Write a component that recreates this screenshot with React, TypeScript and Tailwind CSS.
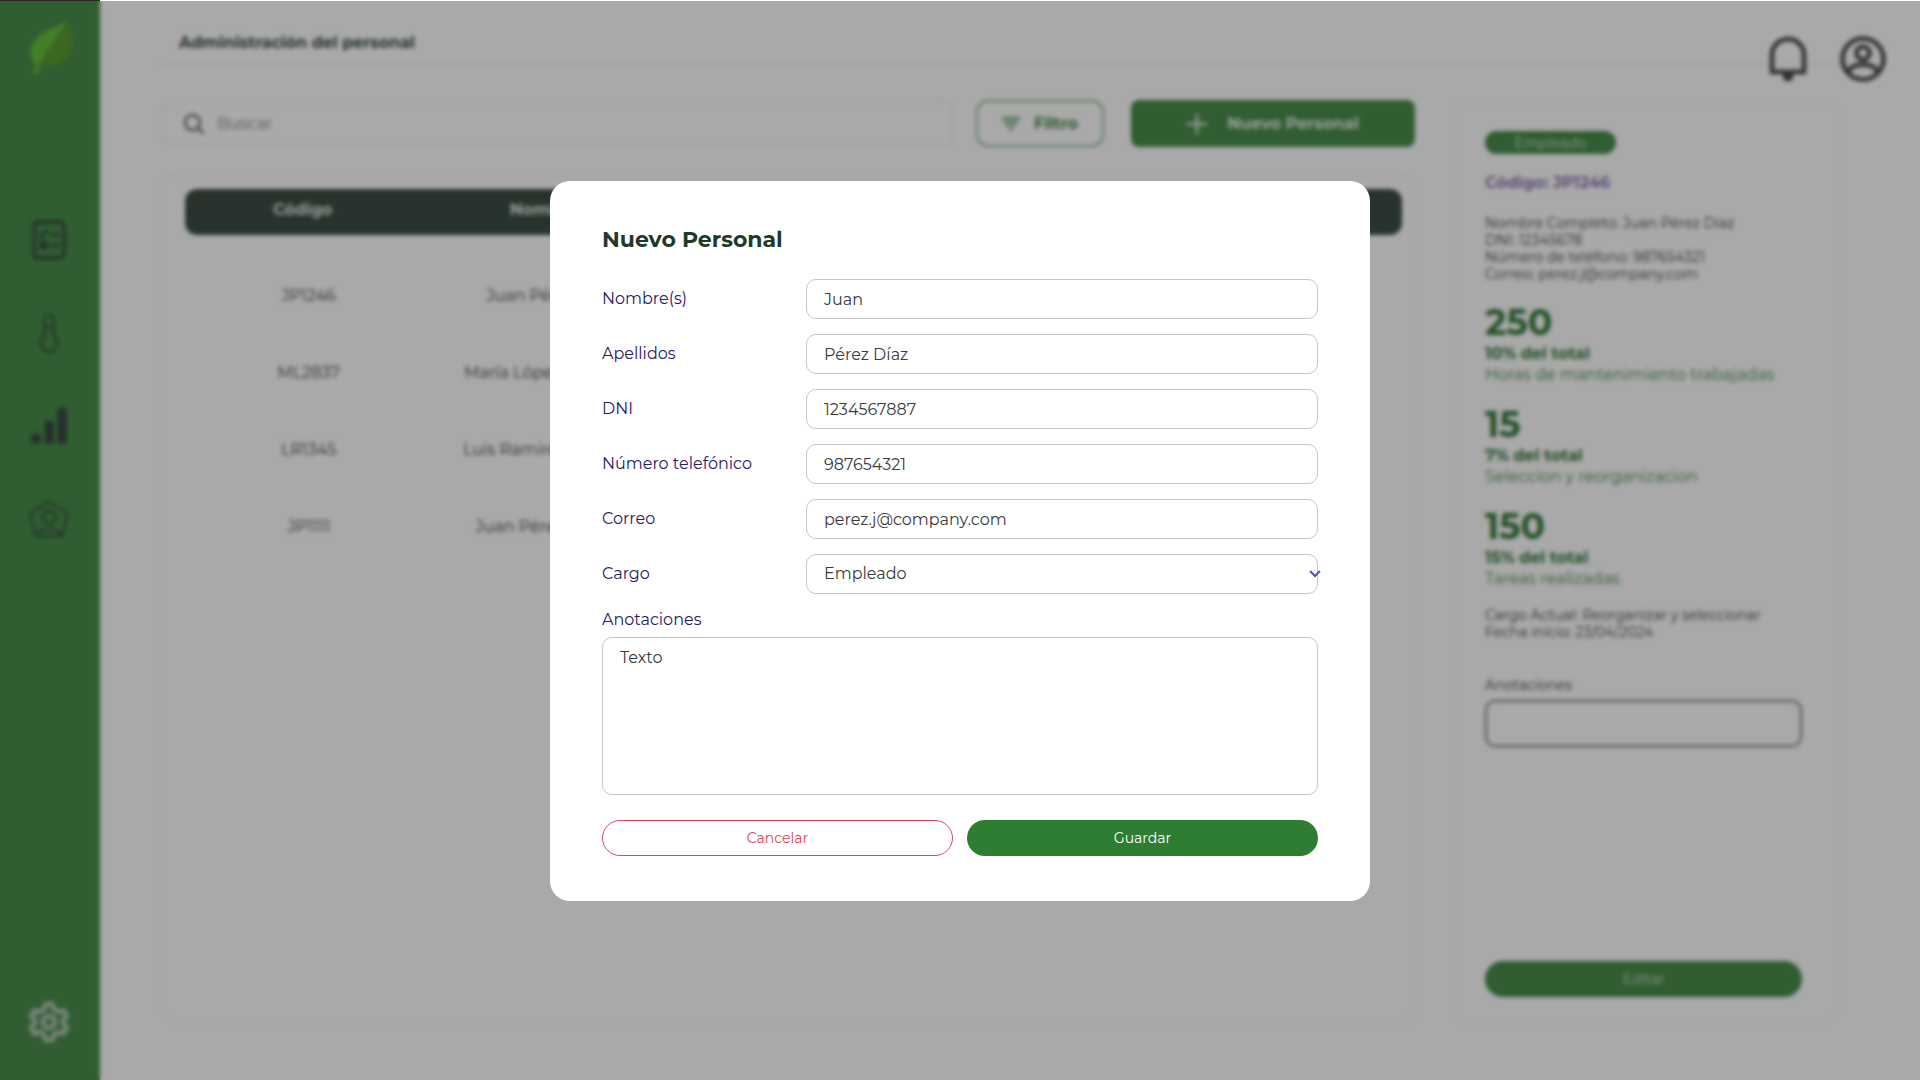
import React from "react";

const people = [
  { code: "JP1246", name: "Juan Pérez Díaz" },
  { code: "ML2837", name: "María López Martínez" },
  { code: "LR1345", name: "Luis Ramirez Vásquez" },
  { code: "JP1111", name: "Juan Pérez Quispe" },
];

const stats = [
  { value: "250", share: "10% del total", label: "Horas de mantenimiento trabajadas" },
  { value: "15", share: "7% del total", label: "Seleccion y reorganizacion" },
  { value: "150", share: "15% del total", label: "Tareas realizadas" },
];

const fields = [
  { id: "nombre", label: "Nombre(s)", value: "Juan", type: "text" },
  { id: "apellidos", label: "Apellidos", value: "Pérez Díaz", type: "text" },
  { id: "dni", label: "DNI", value: "1234567887", type: "text" },
  { id: "telefono", label: "Número telefónico", value: "987654321", type: "tel" },
  { id: "correo", label: "Correo", value: "perez.j@company.com", type: "email" },
];

function LeafLogo() {
  return (
    <svg viewBox="0 0 44 56" className="h-14 w-11" aria-hidden="true">
      <path d="M38 1C30 8 17 10 8 19C-1 28 0 39 7 46L4 54L8 55L11 46Z" fill="#4fb822" />
      <path d="M38 1C46 14 46 29 38 39C31 47 20 49 9 46L38 1Z" fill="#448d14" />
    </svg>
  );
}

function ChecklistIcon() {
  return (
    <svg viewBox="0 0 32 38" className="h-10 w-[34px]" fill="none" stroke="#1f3528" strokeWidth="3.400" aria-hidden="true">
      <rect x="2" y="2" width="28" height="34" rx="3" />
      <path d="M6 13l3 3 6-6M18 14h8M18 24h8" strokeWidth="3" />
      <circle cx="11" cy="24" r="4.500" fill="#1f3528" stroke="none" />
    </svg>
  );
}

function ThermometerIcon() {
  return (
    <svg viewBox="0 0 20 38" className="h-10 w-[22px]" fill="none" stroke="#1f4029" strokeWidth="2.300" aria-hidden="true">
      <path d="M5.500 22V6.500a4.500 4.500 0 0 1 9 0V22a8 8 0 1 1-9 0Z" />
      <path d="M6 13h8" />
    </svg>
  );
}

function BarsIcon() {
  return (
    <svg viewBox="0 0 36 36" className="h-10 w-[38px]" fill="#1f2e28" aria-hidden="true">
      <circle cx="5.500" cy="30" r="5" />
      <rect x="14" y="13" width="8.500" height="22" rx="3.500" />
      <rect x="26" y="1" width="9" height="34" rx="3.500" />
    </svg>
  );
}

function PentagonUserIcon() {
  return (
    <svg viewBox="0 0 42 40" className="h-10 w-[42px]" fill="none" stroke="#1f4029" strokeWidth="2.400" strokeLinejoin="round" aria-hidden="true">
      <path d="M21 2L40 15L34 37H8L2 15Z" />
      <circle cx="21" cy="18" r="6.500" />
      <path d="M9 36c3-8 21-8 24 0" />
    </svg>
  );
}

function GearIcon() {
  return (
    <svg viewBox="0 0 42 42" className="size-[42px]" fill="none" stroke="#b3c3b7" strokeWidth="4.500" strokeLinejoin="round" aria-hidden="true">
      <path d="M17.500 3h7l1.500 5.500 4.500 2.500 5-1.500 3.500 6-4 4v3l4 4-3.500 6-5-1.500-4.500 2.500-1.500 5.500h-7L16 33.500 11.500 31l-5 1.500-3.500-6 4-4v-3l-4-4 3.500-6 5 1.500L16 8.500Z" />
      <circle cx="21" cy="21" r="6" />
    </svg>
  );
}

function BellIcon() {
  return (
    <svg viewBox="0 0 40 47" className="h-[47px] w-10" fill="none" stroke="#2e2e2e" strokeWidth="4.500" aria-hidden="true">
      <path d="M4 37V20a16 16 0 0 1 32 0v17Z" />
      <path d="M15 39h10v3a4 4 0 0 1-4 4h-2a4 4 0 0 1-4-4Z" fill="#2e2e2e" stroke="none" />
    </svg>
  );
}

function UserIcon() {
  return (
    <svg viewBox="0 0 46 46" className="size-[46px]" fill="none" stroke="#2e2e2e" strokeWidth="4.500" aria-hidden="true">
      <circle cx="23" cy="23" r="20.500" />
      <circle cx="23" cy="17" r="6.500" />
      <path d="M8 36c5-10 25-10 30 0" />
    </svg>
  );
}

function Sidebar() {
  return (
    <aside className="flex w-[100px] shrink-0 flex-col items-center bg-[#2f7d32] pt-[19px] pr-0.5 pb-[37px]">
      <a href="#inicio" aria-label="Inicio" className="ml-1"><LeafLogo /></a>
      <nav className="mt-[145px] flex flex-col items-center gap-[53px]">
        <a href="#tareas" aria-label="Tareas"><ChecklistIcon /></a>
        <a href="#temperatura" aria-label="Temperatura"><ThermometerIcon /></a>
        <a href="#reportes" aria-label="Reportes"><BarsIcon /></a>
        <a href="#personal" aria-label="Personal"><PentagonUserIcon /></a>
      </nav>
      <a href="#ajustes" aria-label="Ajustes" className="mt-auto"><GearIcon /></a>
    </aside>
  );
}

function Toolbar() {
  return (
    <div className="flex h-[47px] items-stretch">
      <label className="flex flex-1 items-center gap-3 rounded-xl border-2 border-[#f1f1f1] px-[19px]">
        <svg viewBox="0 0 22 22" className="size-[22px] shrink-0" fill="none" stroke="#555" strokeWidth="2.400" aria-hidden="true">
          <circle cx="9.500" cy="9.500" r="7.500" />
          <path d="M15 15l6 6" />
        </svg>
        <input type="search" aria-label="Buscar" placeholder="Buscar" className="w-full bg-transparent text-base outline-none placeholder:text-[#777]" />
      </label>
      <button type="button" className="ml-[22px] flex w-32 items-center justify-center gap-[14px] rounded-xl border-2 border-[#2f7d32]/60 text-base font-bold text-[#2f7d32]">
        <svg viewBox="0 0 18 14" className="h-[14px] w-[18px]" fill="none" stroke="#5a9a5d" strokeWidth="3" aria-hidden="true">
          <path d="M0 1.500h18M3 6.500h12M6.500 11.500h5" />
        </svg>
        Filtro
      </button>
      <button type="button" className="ml-[27px] flex w-[284px] items-center justify-center gap-5 rounded-lg bg-[#2f7d32] text-base font-bold text-white/85">
        <svg viewBox="0 0 20 20" className="size-5" stroke="currentColor" strokeWidth="2.500" aria-hidden="true">
          <path d="M10 0v20M0 10h20" />
        </svg>
        Nuevo Personal
      </button>
    </div>
  );
}

function PeopleTable() {
  return (
    <div className="mt-[27px] flex-1 rounded-xl border-2 border-[#f3f3f3] pt-[13px] pr-[11px] pl-[21px]">
      <table className="w-full table-fixed text-center text-base text-[#2b2b2b]">
        <thead>
          <tr className="h-[46px] text-white/85">
            <th scope="col" className="w-1/5 rounded-l-xl bg-[#1f3528] pr-2 pb-1 font-bold">Código</th>
            <th scope="col" className="w-1/5 bg-[#1f3528] pr-1 pb-1 font-bold">Nombres</th>
            <td className="w-3/5 rounded-r-xl bg-[#1f3528]"></td>
          </tr>
        </thead>
        <tbody>
          <tr className="h-[22px]"><td></td><td></td><td></td></tr>
          {people.map((p) => (
            <tr key={p.code} className="h-[77px]">
              <td className="pl-1">{p.code}</td>
              <td className="whitespace-nowrap">{p.name}</td>
              <td></td>
            </tr>
          ))}
        </tbody>
      </table>
    </div>
  );
}

function DetailPanel() {
  return (
    <section className="flex w-[386px] shrink-0 flex-col rounded-xl border-2 border-[#f3f3f3] pt-[29px] pr-[34px] pb-[23px] pl-[31px] text-sm text-[#2b2b2b]">
      <span className="flex h-[23px] w-[131px] items-center justify-center rounded-full bg-[#2f7d32] text-sm text-white/75">Empleado</span>
      <p className="mt-[17px] text-base leading-6 font-bold text-[#8467ab]">Código: JP1246</p>
      <div className="mt-5 leading-[17px]">
        <p>Nombre Completo: Juan Pérez Díaz</p>
        <p>DNI: 12345678</p>
        <p>Número de teléfono: 987654321</p>
        <p>Correo: perez.j@company.com</p>
      </div>
      <div className="mt-[19px] flex flex-col gap-[19px]">
        {stats.map((s) => (
          <div key={s.label} className="text-[#2f7d32]">
            <p className="text-[36px] leading-[41px] font-bold text-[#17681e]">{s.value}</p>
            <p className="text-base leading-[21px] font-bold text-[#17681e]">{s.share}</p>
            <p className="text-base leading-[21px]">{s.label}</p>
          </div>
        ))}
      </div>
      <div className="mt-[18px] leading-[17px]">
        <p>Cargo Actual: Reorganizar y seleccionar</p>
        <p>Fecha inicio: 23/04/2024</p>
      </div>
      <label htmlFor="notas" className="mt-[34px] leading-5">Anotaciones</label>
      <input id="notas" type="text" className="mt-[5px] h-[47px] w-full rounded-[10px] border-2 border-[#666] bg-transparent px-3" />
      <button type="button" className="mt-auto h-9 w-full rounded-full bg-[#2f7d32] text-sm text-white/75">Editar</button>
    </section>
  );
}

function NewPersonDialog() {
  return (
    <form
      role="dialog"
      aria-modal="true"
      aria-labelledby="dialog-title"
      onSubmit={(e) => e.preventDefault()}
      className="w-full max-w-[820px] rounded-[20px] bg-white px-[52px] pt-[43px] pb-[45px] text-base"
    >
      <h2 id="dialog-title" className="text-[22px] leading-8 font-bold text-[#1f3a2a]">Nuevo Personal</h2>
      <div className="mt-[23px] flex flex-col gap-[15px]">
        {fields.map((f) => (
          <div key={f.id} className="flex items-center">
            <label htmlFor={f.id} className="w-[204px] shrink-0 text-[#2a205e]">{f.label}</label>
            <input
              id={f.id}
              type={f.type}
              defaultValue={f.value}
              className="h-10 min-w-0 flex-1 rounded-[10px] border border-[#c6c6c6] px-[17px] text-[#3a3a3a] outline-none"
            />
          </div>
        ))}
        <div className="flex items-center">
          <label htmlFor="cargo" className="w-[204px] shrink-0 text-[#2a205e]">Cargo</label>
          <div className="relative flex-1">
            <select id="cargo" defaultValue="Empleado" className="block h-10 w-full appearance-none rounded-[10px] border border-[#c6c6c6] bg-white px-[17px] text-[#3a3a3a] outline-none">
              <option>Empleado</option>
            </select>
            <svg viewBox="0 0 12 8" className="pointer-events-none absolute top-4 -right-[3px] h-2 w-3" fill="none" stroke="#4a55b0" strokeWidth="2" aria-hidden="true">
              <path d="M1 1l5 5 5-5" />
            </svg>
          </div>
        </div>
      </div>
      <label htmlFor="anotaciones" className="mt-[14px] block leading-6 text-[#2a205e]">Anotaciones</label>
      <textarea
        id="anotaciones"
        defaultValue="Texto"
        className="mt-[5px] block h-[158px] w-full resize-none rounded-[10px] border border-[#c6c6c6] px-[17px] py-2 leading-6 text-[#3a3a3a] outline-none"
      />
      <div className="mt-[25px] grid grid-cols-2 gap-[14px] text-sm">
        <button type="button" className="h-9 rounded-full border border-[#dd4560] text-[#dd4560]">Cancelar</button>
        <button type="submit" className="h-9 rounded-full bg-[#2f7d32] text-white">Guardar</button>
      </div>
    </form>
  );
}

export default function App() {
  return (
    <div className="relative min-h-screen overflow-hidden bg-white font-['Montserrat','Inter',sans-serif]">
      <div className="flex min-h-screen" aria-hidden="true">
        <Sidebar />
        <main className="flex min-w-0 flex-1 flex-col pr-[82px] pb-[58px] pl-[62px]">
          <header className="relative -mr-12 flex h-[66px] items-center border-b-2 border-[#f1f1f1] pt-[21px] pl-[17px]">
            <h1 className="text-base leading-6 font-bold text-[#1f3528]">Administración del personal</h1>
            <div className="absolute top-[35px] right-0 flex gap-8">
              <button type="button" aria-label="Notificaciones"><BellIcon /></button>
              <button type="button" aria-label="Cuenta"><UserIcon /></button>
            </div>
          </header>
          <div className="mt-[34px] flex flex-1 gap-[37px]">
            <div className="flex min-w-0 flex-1 flex-col">
              <Toolbar />
              <PeopleTable />
            </div>
            <DetailPanel />
          </div>
        </main>
      </div>
      <div className="absolute inset-0 flex items-center justify-center bg-[#333]/42 pt-0.5 backdrop-blur-[2px]">
        <NewPersonDialog />
      </div>
      <div className="absolute inset-x-0 top-0 flex h-px">
        <div className="w-[100px] bg-[#30282f]" />
        <div className="flex-1 bg-white" />
      </div>
    </div>
  );
}
